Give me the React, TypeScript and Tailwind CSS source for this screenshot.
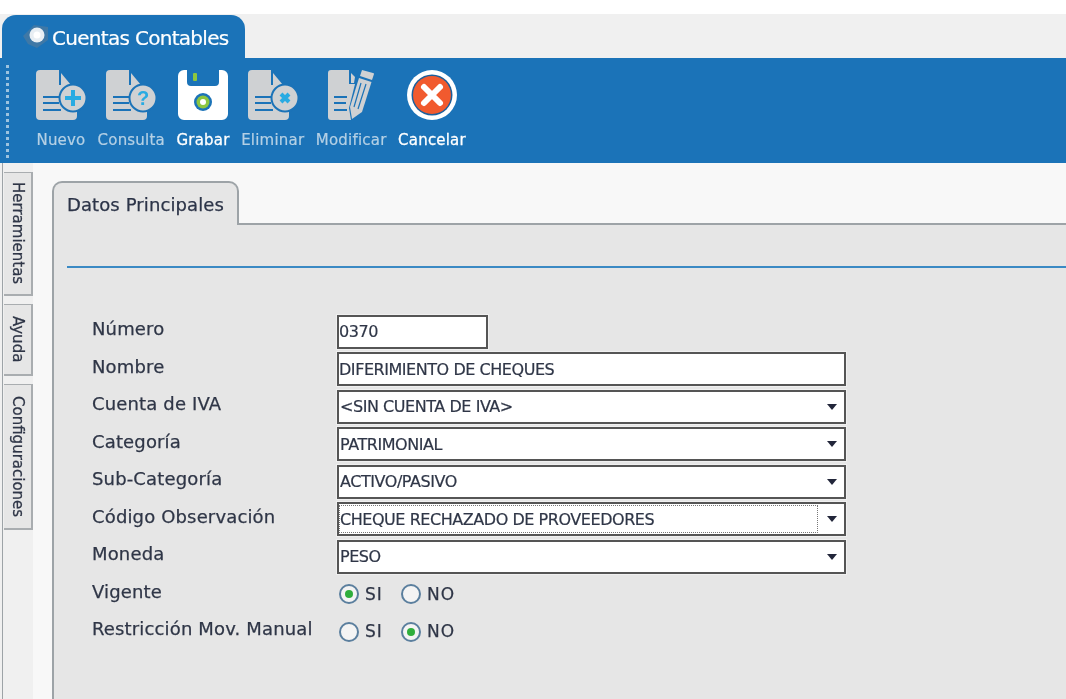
import React from "react";

const font = { fontFamily: '"DejaVu Sans", sans-serif' };

function Doc({ badge }: { badge: React.ReactNode }) {
  return (
    <svg width="50" height="50" viewBox="0 0 50 50" className="block">
      <path d="M4 0H23V15H41V46a4 4 0 0 1-4 4H4a4 4 0 0 1-4-4V4a4 4 0 0 1 4-4Z" fill="#cfd1d3" />
      <path d="M25 3L35 15H25Z" fill="#cfd1d3" />
      <path d="M7 27H25M7 33H23M7 40H25" stroke="#1b73b8" strokeWidth="2" />
      <circle cx="37" cy="28" r="13.5" fill="#cfd1d3" stroke="#1b73b8" strokeWidth="2" />
      {badge}
    </svg>
  );
}

const Plus = <path d="M37 20V36M29 28H45" stroke="#29abe2" strokeWidth="4" />;
const Question = (
  <text x="37" y="35" textAnchor="middle" fontSize="20" fontWeight="700" fill="#29abe2" fontFamily="Liberation Sans, sans-serif">?</text>
);
const Cross = <path d="M33 24L41 32M41 24L33 32" stroke="#29abe2" strokeWidth="4" />;

function Save() {
  return (
    <svg width="50" height="50" viewBox="0 0 50 50" className="block">
      <path d="M6 0H9V12a4 4 0 0 0 4 4H37a4 4 0 0 0 4-4V0H44a6 6 0 0 1 6 6V44a6 6 0 0 1-6 6H6a6 6 0 0 1-6-6V6a6 6 0 0 1 6-6Z" fill="#fff" />
      <rect x="15" y="3" width="4" height="8" rx="1" fill="#8cc63f" />
      <circle cx="25" cy="32" r="9" fill="#1b73b8" />
      <circle cx="25" cy="32" r="6.5" fill="#8cc63f" />
      <circle cx="25" cy="32" r="3" fill="#fff" />
    </svg>
  );
}

function Edit() {
  return (
    <svg width="46" height="50" viewBox="0 0 46 50" className="block">
      <path d="M3 0H21V14H27L21 38 23 50H3a3 3 0 0 1-3-3V3a3 3 0 0 1 3-3Z" fill="#cfd1d3" />
      <path d="M23 3L27 7 26 13H23Z" fill="#cfd1d3" />
      <path d="M6 27H19M6 33H18M6 40H19" stroke="#1b73b8" strokeWidth="2" />
      <path d="M34 0L45 3a1 1 0 0 1 1 1L44 10 32 6Z" fill="#cfd1d3" />
      <path d="M31 8L43.5 12 34 42 24 49 22 37Z" fill="#cfd1d3" />
      <path d="M33 13L26 37M38 14L30 39" stroke="#1b73b8" strokeWidth="1.2" />
    </svg>
  );
}

function Cancel() {
  return (
    <svg width="50" height="50" viewBox="0 0 50 50" className="block">
      <circle cx="25" cy="25" r="25" fill="#fff" />
      <circle cx="25" cy="25" r="20.5" fill="#1b5f9c" />
      <circle cx="25" cy="25" r="19" fill="#f15a2e" />
      <path d="M17 17L33 33M33 17L17 33" stroke="#fff" strokeWidth="6" strokeLinecap="round" />
    </svg>
  );
}

function Tool({ icon, label, on }: { icon: React.ReactNode; label: string; on?: boolean }) {
  return (
    <div className="flex flex-col items-center">
      <div className="h-[50px] flex justify-center">{icon}</div>
      <span className={`mt-[9px] text-[15px] leading-[22px] tracking-[0.2px] ${on ? "text-white font-medium [-webkit-text-stroke:0.3px_#fff]" : "text-[#b4d0e5] [-webkit-text-stroke:0.2px_#b4d0e5]"}`}>{label}</span>
    </div>
  );
}

function SideTab({ label, h }: { label: string; h: string }) {
  return (
    <div className={`${h} w-[29px] bg-[#e6e6e6] border-t border-r-2 border-b-2 border-[#a9adb0] flex justify-center items-center`}>
      <span className="[writing-mode:vertical-rl] text-[15px] text-[#2f3647] [-webkit-text-stroke:0.25px_#2f3647]">{label}</span>
    </div>
  );
}

function Row({ label, children }: { label: string; children: React.ReactNode }) {
  return (
    <div className="h-[37.5px] flex items-center">
      <div className="w-[245px] text-[18px] tracking-[0.15px] text-[#2f3647] [-webkit-text-stroke:0.25px_#2f3647] -mt-[6px]">{label}</div>
      {children}
    </div>
  );
}

function Field({ value, w = "w-[509px]" }: { value: string; w?: string }) {
  return (
    <div className={`${w} h-[34px] bg-white border-2 border-[#555] shadow-[0_0_0_1px_#f0f0f0] flex items-center pt-[1px] text-[16px] tracking-[-0.45px] text-[#2f3647] [-webkit-text-stroke:0.2px_#2f3647]`}>
      {value}
    </div>
  );
}

function Select({ value, focus }: { value: string; focus?: boolean }) {
  return (
    <div className="w-[509px] h-[34px] bg-white border-2 border-[#555] shadow-[0_0_0_1px_#f0f0f0] flex items-center pr-[7px] text-[16px] tracking-[-0.45px] text-[#2f3647] [-webkit-text-stroke:0.2px_#2f3647]">
      <div className={`flex-1 h-[28px] flex items-center pt-[1px] ${focus ? "border border-dotted border-[#777] mr-[9px]" : "pl-[1px]"}`}>{value}</div>
      <svg width="10" height="6" viewBox="0 0 10 6" className="shrink-0"><path d="M0 0H10L5 6Z" fill="#22263a" /></svg>
    </div>
  );
}

function Radio({ label, on }: { label: string; on?: boolean }) {
  return (
    <div className="flex items-center w-[62px]">
      <div className="w-[20px] h-[20px] rounded-full border-2 border-[#5b7f9e] bg-[#f4f4f4] flex items-center justify-center">
        {on && <div className="w-[8px] h-[8px] rounded-full bg-[#2fae3c]" />}
      </div>
      <span className="ml-[6px] text-[17px] tracking-[1px] text-[#2f3647] [-webkit-text-stroke:0.25px_#2f3647]">{label}</span>
    </div>
  );
}

export default function App() {
  return (
    <div className="w-[1066px] h-[699px] overflow-hidden bg-white flex flex-col blur-[0.3px]" style={font}>
      <div className="h-[14px] bg-white shrink-0" />
      <div className="h-[44px] shrink-0 bg-[#f0f0f0] flex items-end pl-[2px]">
        <div className="w-[243px] h-[43px] bg-[#1b73b8] rounded-t-[14px] flex items-center pl-[20px] pt-[2px]">
          <svg width="28" height="26" viewBox="0 0 28 26" className="shrink-0 -mt-[1px]">
            <path d="M1 12L12 1 26 3 26 16 15 24 6 20Z" fill="#3f78a6" />
            <circle cx="15" cy="11" r="7.5" fill="#e8eef3" />
            <circle cx="15" cy="11" r="3.5" fill="#fff" />
          </svg>
          <span className="ml-[2px] text-[20px] tracking-[-0.7px] text-white [-webkit-text-stroke:0.2px_#fff]">Cuentas Contables</span>
        </div>
      </div>
      <div className="h-[105px] shrink-0 bg-[#1b73b8] flex pl-[6px] pt-[7px] pb-[5px]">
        <div className="w-[3px] border-l-[3px] border-dotted border-[#9cc3df]" />
        <div className="flex gap-[11.6px] pl-[27px] pt-[5px]">
          <Tool icon={<Doc badge={Plus} />} label="Nuevo" />
          <Tool icon={<Doc badge={Question} />} label="Consulta" />
          <Tool icon={<Save />} label="Grabar" on />
          <Tool icon={<Doc badge={Cross} />} label="Eliminar" />
          <Tool icon={<Edit />} label="Modificar" />
          <Tool icon={<Cancel />} label="Cancelar" on />
        </div>
      </div>
      <div className="flex-1 flex min-h-0 bg-[#f8f8f8]">
        <div className="w-[33px] shrink-0 bg-[#f0f0f0] pl-[2px]">
          <div className="h-full border-l border-[#9da3a7] pt-[9px] flex flex-col gap-[8px] pl-[1px]">
            <SideTab label="Herramientas" h="h-[124px]" />
            <SideTab label="Ayuda" h="h-[72px]" />
            <SideTab label="Configuraciones" h="h-[146px]" />
          </div>
        </div>
        <div className="w-[19px] shrink-0" />
        <div className="flex-1 flex flex-col pt-[18px] min-w-0">
          <div className="flex h-[44px] shrink-0">
            <div className="w-[187px] bg-[#e6e6e6] border-2 border-b-0 border-[#9da3a7] rounded-t-[10px] pl-[13px] pt-[8px] text-[18px] tracking-[0.1px] text-[#2c3448] [-webkit-text-stroke:0.25px_#2c3448]">Datos Principales</div>
            <div className="flex-1 border-b-2 border-[#9da3a7]" />
          </div>
          <div className="flex-1 bg-[#e6e6e6] border-l-2 border-[#9da3a7] pl-[13px]">
            <div className="h-[2px] bg-[#3b8ac4] mt-[41px]" />
            <div className="pl-[25px] pt-[45px]">
              <Row label="Número"><Field value="0370" w="w-[151px]" /></Row>
              <Row label="Nombre"><Field value="DIFERIMIENTO DE CHEQUES" /></Row>
              <Row label="Cuenta de IVA"><Select value="<SIN CUENTA DE IVA>" /></Row>
              <Row label="Categoría"><Select value="PATRIMONIAL" /></Row>
              <Row label="Sub-Categoría"><Select value="ACTIVO/PASIVO" /></Row>
              <Row label="Código Observación"><Select value="CHEQUE RECHAZADO DE PROVEEDORES" focus /></Row>
              <Row label="Moneda"><Select value="PESO" /></Row>
              <Row label="Vigente"><div className="flex pl-[2px]"><Radio label="SI" on /><Radio label="NO" /></div></Row>
              <Row label="Restricción Mov. Manual"><div className="flex pl-[2px]"><Radio label="SI" /><Radio label="NO" on /></div></Row>
            </div>
          </div>
        </div>
      </div>
    </div>
  );
}
